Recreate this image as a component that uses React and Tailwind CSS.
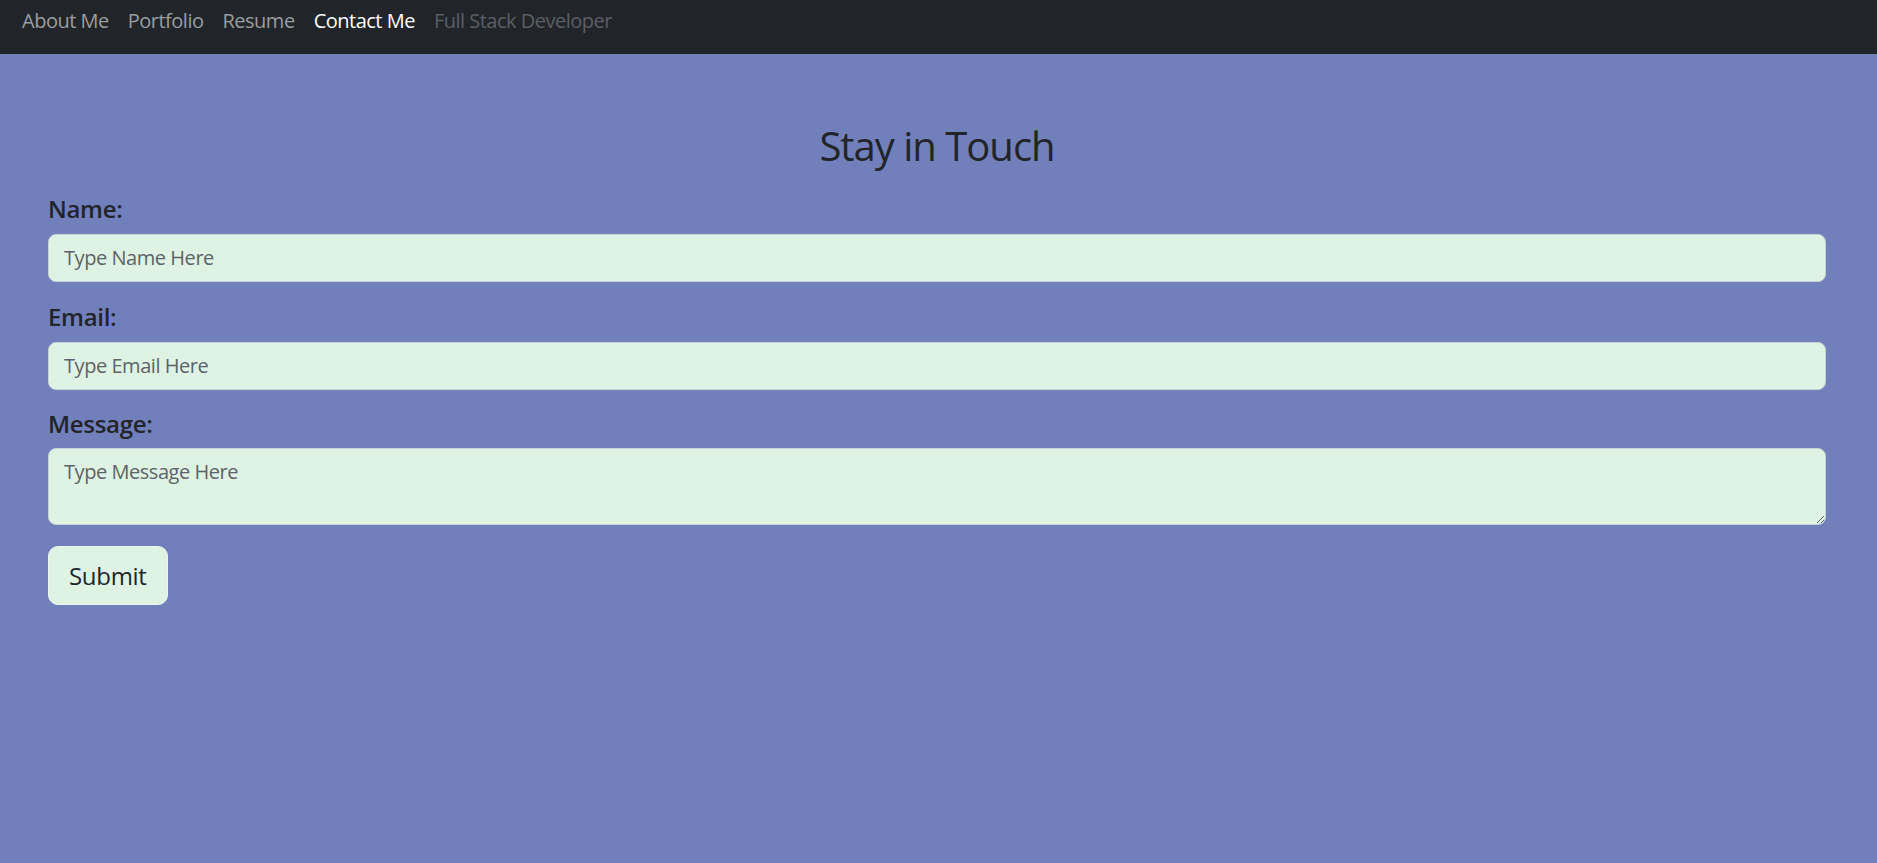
import React from 'react';

const links = [
  { label: 'About Me', cls: 'text-[#9a9da0]' },
  { label: 'Portfolio', cls: 'text-[#9a9da0]' },
  { label: 'Resume', cls: 'text-[#9a9da0]' },
  { label: 'Contact Me', cls: 'text-white' },
  { label: 'Full Stack Developer', cls: 'text-[#5b5f64]' },
];

const fieldCls =
  'block w-full rounded-[8px] border border-[#c9d3d6] bg-[#dff3e4] px-[15px] py-[8px] text-[20px] leading-[30px] tracking-[-0.45px] text-[#212529] placeholder:text-[#5c636a] outline-none';

const App = () => {
  return (
    <div className="min-h-screen bg-[#7180bb] font-['Open_Sans',sans-serif] text-[#212529]">
      {/* Navbar */}
      <nav className="h-[54px] bg-[#212529] px-[22px] pt-[6px]">
        <ul className="flex gap-[19px] text-[20px] leading-[30px] tracking-[-0.5px]">
          {links.map((l) => (
            <li key={l.label}>
              <a href="#" className={l.cls}>
                {l.label}
              </a>
            </li>
          ))}
        </ul>
      </nav>

      <main className="pl-[48px] pr-[51px] pt-[68px]">
        <h1 className="text-center text-[40px] leading-[48px] tracking-[-1px]">Stay in Touch</h1>

        <form className="mt-[24px]" onSubmit={(e) => e.preventDefault()}>
          <div>
            <label htmlFor="name" className="mb-[11px] block text-[24px] font-semibold leading-[29px] tracking-[-0.3px]">
              Name:
            </label>
            <input id="name" type="text" placeholder="Type Name Here" className={fieldCls} />
          </div>

          <div className="mt-[20px]">
            <label htmlFor="email" className="mb-[11px] block text-[24px] font-semibold leading-[29px] tracking-[-0.3px]">
              Email:
            </label>
            <input id="email" type="email" placeholder="Type Email Here" className={fieldCls} />
          </div>

          <div className="mt-[19px]">
            <label htmlFor="message" className="mb-[10px] block text-[24px] font-semibold leading-[29px] tracking-[-0.3px]">
              Message:
            </label>
            <textarea id="message" rows={2} placeholder="Type Message Here" className={fieldCls + ' h-[77px]'} />
          </div>

          <button
            type="submit"
            className="mt-[21px] h-[59px] rounded-[10px] border border-[#eef5f0] bg-[#dff3e4] px-[20px] text-[24px] leading-[36px] tracking-[-0.3px] text-[#212529]"
          >
            Submit
          </button>
        </form>
      </main>
    </div>
  );
};

export default App;
